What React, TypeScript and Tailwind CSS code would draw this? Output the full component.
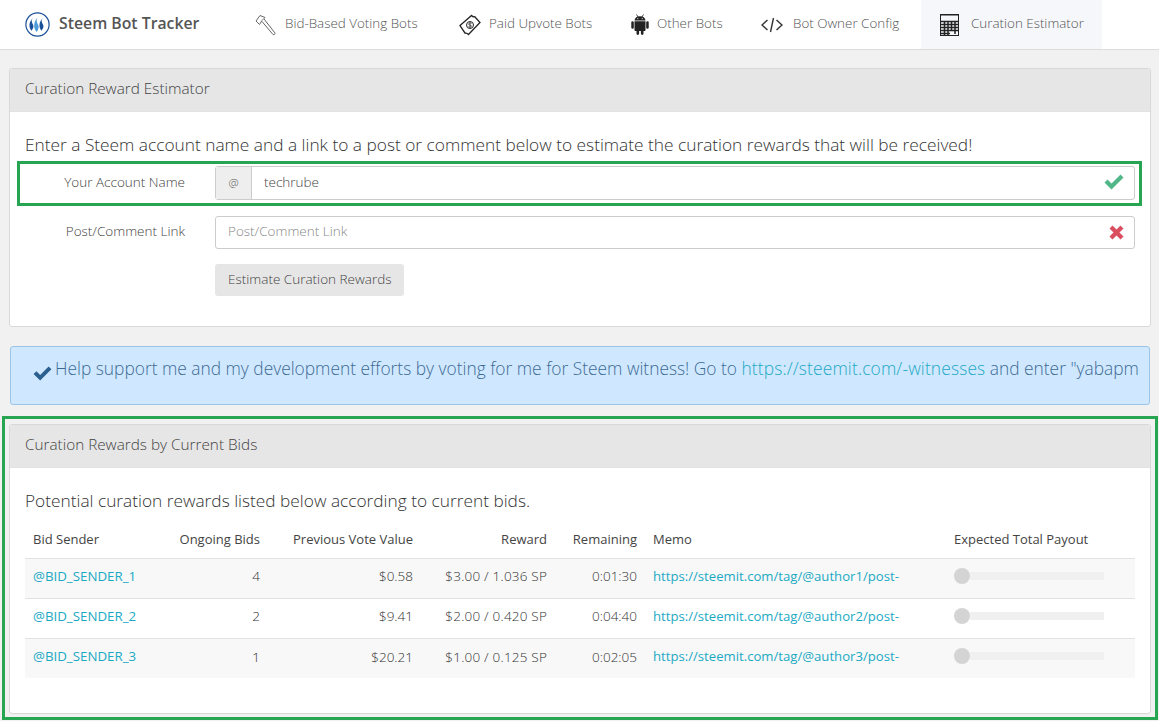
import React from "react";

const SteemLogo = () => (
  <svg width="25" height="25" viewBox="0 0 25 25" fill="none">
    <circle cx="12.500" cy="12.500" r="11.600" stroke="#1a5099" strokeWidth="1.200" />
    <path d="M8.400 5.500C5.500 8 7 10.500 8 12.500c1 2.300.4 3.700-1.600 6.300C5 16.500 4.300 15 4.500 12.500c.2-3 2.200-5.600 3.900-7z" fill="#1a5099" />
    <path d="M13.600 4.500c-3 2.800-1.800 5.800-.6 8 1.300 2.500.8 4.500-1.500 7.500-1.600-2.500-2.600-4.300-2.300-7.500.3-3.200 2.600-6.500 4.400-8z" fill="#4b9cd8" />
    <path d="M18.400 5.500C15.500 8 17 10.500 18 12.500c1 2.300.4 3.700-1.600 6.300-1.400-2.300-2.100-3.800-1.900-6.300.2-3 2.200-5.600 3.900-7z" fill="#1a5099" />
  </svg>
);

const Hammer = () => (
  <svg width="22" height="22" viewBox="0 0 22 22" fill="none" stroke="#666" strokeWidth="1">
    <path d="M1 7 5 1.500 10 3.500 7 6.500 4.500 10.500z" fill="#fff" />
    <path d="M7 7.500 18 20.500c.8.800 2.600-.6 1.900-1.600L9 5" fill="#fff" />
  </svg>
);

const Money = () => (
  <svg width="22" height="22" viewBox="0 0 22 22" fill="none" stroke="#222" strokeWidth="1.300">
    <path d="M1 11.500 12.500 1.500c1 1.300 2.200 1.500 3.300 1.200l5.200 5.800L9.500 20.500c-1-1.300-2.200-1.600-3.400-1.300z" />
    <circle cx="11" cy="11" r="3.500" strokeWidth="1" />
    <path d="M12.500 9.500c-1-.8-3-.5-3 .7s3 .5 3 1.800-2 1.300-3 .6M11 8v6" strokeWidth="0.700" />
  </svg>
);

const Android = () => (
  <svg width="18" height="21" viewBox="0 0 18 21" fill="#222">
    <path d="M3.500 6.500C3.700 3.800 6 2.300 9 2.300s5.300 1.500 5.500 4.200z" />
    <path d="M5.500 .5 7 3M12.500 .5 11 3" stroke="#222" strokeWidth="0.800" fill="none" />
    <path d="M3.500 7.300h11V16c0 .6-.4 1-1 1h-1v2.600a1.300 1.300 0 0 1-2.600 0V17H8.100v2.600a1.300 1.300 0 0 1-2.600 0V17h-1c-.6 0-1-.4-1-1z" />
    <rect x="0.300" y="7.300" width="2.500" height="7.500" rx="1.250" />
    <rect x="15.200" y="7.300" width="2.500" height="7.500" rx="1.250" />
    <circle cx="6.800" cy="4.600" r=".6" fill="#fff" />
    <circle cx="11.200" cy="4.600" r=".6" fill="#fff" />
  </svg>
);

const CodeIcon = () => (
  <svg width="22" height="16" viewBox="0 0 22 16" fill="none" stroke="#333" strokeWidth="1.400">
    <path d="M6.500 3 1 8l5.500 5M15.500 3 21 8l-5.500 5M12.500 1 9.500 15" />
  </svg>
);

const Calculator = () => (
  <svg width="19" height="22" viewBox="0 0 19 22" fill="none">
    <rect x="0.500" y="0.500" width="18" height="21" stroke="#222" />
    <rect x="0" y="0" width="19" height="1.500" fill="#222" />
    <path d="M1 7.500h17M1 10.500h17M1 13.500h17M1 16.500h17M1 19.500h9M4.500 7v14M8 7v14M11.500 7v10M15 7v13" stroke="#222" strokeWidth="1.500" />
  </svg>
);

const OkIcon = ({ color, w, h }: { color: string; w: number; h: number }) => (
  <svg width={w} height={h} viewBox="0 0 20 16">
    <path d="M0.500 8.500 3.500 5.500 7.500 9.500 16.500 0.500 19.500 3.500 7.500 15.500z" fill={color} />
  </svg>
);

const XIcon = () => (
  <svg width="15" height="15" viewBox="0 0 15 15">
    <path d="M3.500.500 7.500 4.500 11.500.500 14.500 3.500 10.500 7.500 14.500 11.500 11.500 14.500 7.500 10.500 3.500 14.500.500 11.500 4.500 7.500.500 3.500z" fill="#d94f60" />
  </svg>
);

const NavItem = ({ icon, label, active, cls, iconCls }: { icon: React.ReactNode; label: string; active?: boolean; cls: string; iconCls: string }) => (
  <div className={`flex h-full items-center pl-[19px] ${cls} ${active ? "bg-[#f5f7fb]" : ""}`}>
    <span className={`flex shrink-0 items-center ${iconCls}`}>{icon}</span>
    <span className="ml-[8px] whitespace-nowrap pb-[2px] text-[13.400px] font-light text-[#555]">{label}</span>
  </div>
);

const Heading = ({ children }: { children: React.ReactNode }) => (
  <div className="flex h-[43px] items-center rounded-t-[3px] border-b border-[#e2e2e2] bg-[#e6e6e6] pb-[4px] pl-[15px] text-[15.300px] font-light text-[#444]">
    {children}
  </div>
);

const rows = [
  ["@BID_SENDER_1", "4", "$0.58", "$3.00 / 1.036 SP", "0:01:30", "https://steemit.com/tag/@author1/post-"],
  ["@BID_SENDER_2", "2", "$9.41", "$2.00 / 0.420 SP", "0:04:40", "https://steemit.com/tag/@author2/post-"],
  ["@BID_SENDER_3", "1", "$20.21", "$1.00 / 0.125 SP", "0:02:05", "https://steemit.com/tag/@author3/post-"],
];

export default function App() {
  return (
    <div className="h-[721px] w-[1159px] overflow-hidden bg-[#f1f1f1] font-['Open_Sans',sans-serif] text-[#333]">
      <nav className="flex h-[50px] items-center border-b border-[#dcdcdc] bg-white">
        <div className="flex w-[236px] shrink-0 items-center pl-[25px]">
          <SteemLogo />
          <span className="ml-[9px] pb-[2px] text-[15.800px] font-semibold text-[#555]">Steem Bot Tracker</span>
        </div>
        <div className="flex h-full items-center">
          <NavItem cls="w-[204px]" iconCls="w-[22px]" icon={<Hammer />} label="Bid-Based Voting Bots" />
          <NavItem cls="w-[172px]" iconCls="w-[22px]" icon={<Money />} label="Paid Upvote Bots" />
          <NavItem cls="w-[130px]" iconCls="w-[18px]" icon={<Android />} label="Other Bots" />
          <NavItem cls="w-[179px]" iconCls="w-[24px]" icon={<CodeIcon />} label="Bot Owner Config" />
          <NavItem active cls="w-[181px]" iconCls="w-[23px]" icon={<Calculator />} label="Curation Estimator" />
        </div>
      </nav>

      <div className="pl-[9px] pr-[8px] pt-[18px]">
        <section className="h-[259px] rounded-[3px] border border-[#d8d8d8] bg-white">
          <Heading>Curation Reward Estimator</Heading>
          <div className="px-[15px]">
            <p className="mt-[21px] text-[17.300px] font-light leading-[24px] text-[#333]">
              Enter a Steem account name and a link to a post or comment below to estimate the curation rewards that will be received!
            </p>
            <div className="relative mt-[9px] flex h-[34px] items-center">
              <label className="w-[160px] pb-[2px] text-right text-[13.500px] font-light text-[#444]">Your Account Name</label>
              <div className="ml-[30px] flex h-[34px] flex-1 items-stretch rounded-[3px] border border-[#ccc] text-[13.500px]">
                <span className="flex w-[36px] items-center justify-center border-r border-[#ccc] bg-[#eee] text-[11.500px] font-light text-[#555]">@</span>
                <span className="flex flex-1 items-center pb-[2px] pl-[12px] font-light text-[#444]">techrube</span>
                <span className="flex w-[30px] items-center justify-start pb-[2px]"><OkIcon color="#52b788" w={20} h={16} /></span>
              </div>
              <div className="pointer-events-none absolute bottom-[-6px] left-[-8px] right-[-7px] top-[-5px] border-[3px] border-[#27a552]" />
            </div>
            <div className="mt-[16px] flex h-[33px] items-center">
              <label className="w-[160px] pb-[2px] text-right text-[13.500px] font-light text-[#444]">Post/Comment Link</label>
              <div className="ml-[30px] flex h-[33px] flex-1 items-center rounded-[3px] border border-[#ccc] pl-[12px] text-[13.500px] font-light text-[#888]">
                <span className="flex-1 pb-[2px]">Post/Comment Link</span>
                <span className="flex w-[25px] items-center justify-start"><XIcon /></span>
              </div>
            </div>
            <div className="mt-[15px] pl-[190px]">
              <button className="h-[32px] rounded-[3px] bg-[#e6e6e6] px-[13px] pb-[2px] text-[13.500px] font-light text-[#444]">Estimate Curation Rewards</button>
            </div>
          </div>
        </section>

        <div className="mx-[1px] mt-[19px] flex h-[59px] items-center overflow-hidden whitespace-nowrap rounded-[3px] border border-[#9cc4e4] bg-[#cfe8ff] pb-[14px] pl-[22px] text-[17.350px] font-light text-[#3d6a94]">
          <span className="mr-[3px] mt-[9px] shrink-0"><OkIcon color="#2a5f8f" w={19} h={15} /></span>
          <span>
            Help support me and my development efforts by voting for me for Steem witness! Go to{" "}
            <span className="tracking-[0.150px] text-[#1ba9c4]">https://steemit.com/-witnesses</span> and enter "yabapm
          </span>
        </div>

        <section className="relative mt-[19px] h-[290px] rounded-[3px] border border-[#d8d8d8] bg-white">
          <div className="pointer-events-none absolute bottom-[-7px] left-[-8px] right-[-8px] top-[-9px] border-[3px] border-[#27a552]" />
          <Heading>Curation Rewards by Current Bids</Heading>
          <div className="px-[15px]">
            <p className="mt-[21px] text-[17.300px] font-light leading-[24px]">Potential curation rewards listed below according to current bids.</p>
            <table className="mt-[7px] w-[1110px] table-fixed border-collapse text-[13.500px]">
              <thead>
                <tr className="h-[38px] text-[13px] text-[#444]">
                  <th className="w-[140px] pl-[8px] pt-[2px] text-left font-normal">Bid Sender</th>
                  <th className="w-[103px] pr-[8px] pt-[2px] text-right font-normal">Ongoing Bids</th>
                  <th className="w-[153px] pr-[8px] pt-[2px] text-right font-normal">Previous Vote Value</th>
                  <th className="w-[134px] pr-[8px] pt-[2px] text-right font-normal">Reward</th>
                  <th className="w-[90px] pr-[8px] pt-[2px] text-right font-normal">Remaining</th>
                  <th className="w-[301px] pl-[8px] pt-[2px] text-left font-normal">Memo</th>
                  <th className="pl-[8px] pt-[2px] text-left font-normal">Expected Total Payout</th>
                </tr>
              </thead>
              <tbody>
                {rows.map((r, i) => (
                  <tr key={r[0]} className={`h-[40px] border-t border-[#e2e2e2] font-light text-[#333] ${i % 2 === 0 ? "bg-[#f8f8f8]" : "bg-white"}`}>
                    <td className="pb-[3px] pl-[8px] text-[13.300px] font-normal text-[#1ba9c4]">{r[0]}</td>
                    <td className="pb-[3px] pr-[8px] text-right">{r[1]}</td>
                    <td className="pb-[3px] pr-[8px] text-right">{r[2]}</td>
                    <td className="pb-[3px] pr-[8px] text-right tracking-[0.200px]">{r[3]}</td>
                    <td className="pb-[3px] pr-[8px] text-right">{r[4]}</td>
                    <td className="pb-[3px] pl-[8px] text-[13.150px] font-normal text-[#1ba9c4]">{r[5]}</td>
                    <td className="pb-[4px] pl-[8px]">
                      <div className="flex h-[16px] w-[150px] items-center">
                        <div className="h-[16px] w-[16px] shrink-0 rounded-full bg-[#d4d4d4]" />
                        <div className="h-[8px] flex-1 bg-[#f0f0f0]" />
                      </div>
                    </td>
                  </tr>
                ))}
              </tbody>
            </table>
          </div>
        </section>
      </div>
    </div>
  );
}
